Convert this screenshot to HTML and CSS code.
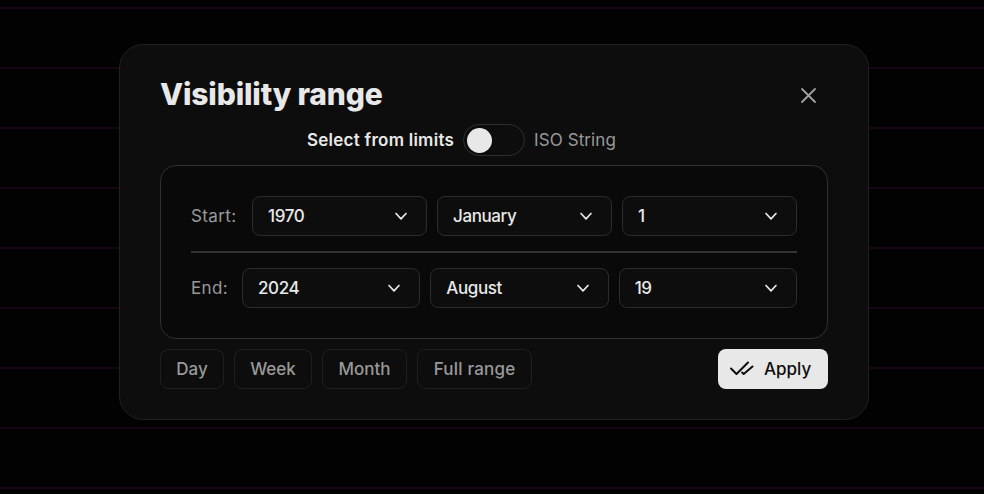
FILE: index.html
```html
<!DOCTYPE html>
<html lang="en">
<head>
<meta charset="utf-8">
<title>Visibility range</title>
<link rel="stylesheet" href="styles.css">
</head>
<body>
<svg class="defs">
  <symbol id="chevron" viewBox="0 0 24 24"><path d="M6 9l6 6.500L18 9"/></symbol>
</svg>
<main class="dialog">
  <header class="head">
    <h1>Visibility range</h1>
    <button class="close" aria-label="Close"><svg viewBox="0 0 21 21"><path d="M4 4l13 13M17 4L4 17"/></svg></button>
  </header>
  <div class="mode">
    <span class="mode-on">Select from limits</span>
    <span class="switch"><span class="knob"></span></span>
    <span class="mode-off">ISO String</span>
  </div>
  <section class="panel">
    <div class="row">
      <span class="label label-start">Start:</span>
      <div class="selects">
        <div class="select"><span>1970</span><svg><use href="#chevron"/></svg></div>
        <div class="select"><span>January</span><svg><use href="#chevron"/></svg></div>
        <div class="select"><span>1</span><svg><use href="#chevron"/></svg></div>
      </div>
    </div>
    <div class="rule"></div>
    <div class="row">
      <span class="label label-end">End:</span>
      <div class="selects">
        <div class="select"><span>2024</span><svg><use href="#chevron"/></svg></div>
        <div class="select"><span>August</span><svg><use href="#chevron"/></svg></div>
        <div class="select"><span>19</span><svg><use href="#chevron"/></svg></div>
      </div>
    </div>
  </section>
  <footer class="foot">
    <button class="btn day">Day</button>
    <button class="btn week">Week</button>
    <button class="btn month">Month</button>
    <button class="btn full">Full range</button>
    <button class="apply"><svg viewBox="0 0 24 24"><path d="M1 11.500l5.500 5.500L18 5.500M12.200 15.500l1.500 1.500L22.500 9.500"/></svg><span>Apply</span></button>
  </footer>
</main>
</body>
</html>
```
FILE: styles.css
```css
* { box-sizing: border-box; }
body {
  margin: 0;
  height: 494px;
  overflow: hidden;
  padding: 44px 0 0 119px;
  background: #020202 repeating-linear-gradient(#020202 0 7px, #180618 7px 9px, #020202 9px 60px);
  font: 17px/24px Inter, "Liberation Sans", sans-serif;
  color: #e8e8e8;
}
button { font: inherit; margin: 0; white-space: nowrap; }
svg { fill: none; stroke: currentColor; stroke-linecap: round; stroke-linejoin: round; flex: none; }
.defs { display: none; }
.dialog {
  width: 750px;
  height: 376px;
  padding: 30px 40px 0;
  border: 1px solid #202020;
  border-radius: 24px;
  background: #0d0d0d;
}
.head { display: flex; justify-content: space-between; height: 40px; }
h1 { margin: 0; font-size: 30px; line-height: 39px; font-weight: 800; letter-spacing: -0.15px; white-space: nowrap; }
.close { display: flex; width: 40px; height: 40px; padding: 10px 9px 9px 10px; border: 0; background: none; color: #a0a0a0; }
.close svg { width: 21px; height: 21px; stroke-width: 1.8; }
.mode { display: flex; align-items: center; height: 32px; margin: 9px 0 9px 147px; gap: 9px; white-space: nowrap; }
.mode-on { width: 147px; font-weight: 600; letter-spacing: 0.25px; }
.mode-off { color: #999; letter-spacing: 0.1px; }
.switch { display: flex; width: 62px; height: 32px; padding: 3px; border: 1px solid #2e2e2e; border-radius: 16px; }
.knob { width: 25px; height: 25px; border-radius: 50%; background: #e8e8e8; }
.panel {
  height: 174px;
  padding: 30px;
  border: 1px solid #303030;
  border-radius: 16px;
  background: #090909;
}
.row { display: flex; align-items: center; height: 40px; }
.label { color: #999; white-space: nowrap; letter-spacing: 0.4px; }
.label-start { width: 61px; }
.label-end { width: 51px; }
.selects { display: grid; grid-template-columns: repeat(3, 1fr); gap: 10px; flex: 1; }
.select {
  display: flex;
  align-items: center;
  justify-content: space-between;
  height: 40px;
  padding: 0 15px;
  border: 1px solid #2c2c2c;
  border-radius: 8px;
  background: #0d0d0d;
  font-weight: 500;
  letter-spacing: -0.4px;
}
.select svg { width: 20px; height: 20px; stroke-width: 2; }
.rule { height: 2px; margin: 15px 0; background: #333; }
.foot { display: flex; gap: 10px; margin-top: 10px; }
.btn {
  height: 40px;
  padding: 0;
  border: 1px solid #1f1f1f;
  border-radius: 8px;
  background: #0d0d0d;
  color: #999;
  font-weight: 500;
}
.day { width: 64px; }
.week { width: 78px; }
.month { width: 85px; }
.full { width: 115px; letter-spacing: 0.2px; }
.apply {
  display: flex;
  align-items: center;
  gap: 10px;
  width: 110px;
  height: 40px;
  margin-left: auto;
  padding: 0 0 0 12px;
  border: 0;
  border-radius: 8px;
  background: #e8e8e8;
  color: #0d0d0d;
  font-weight: 500;
}
.apply svg { width: 24px; height: 24px; stroke-width: 2; }
```
